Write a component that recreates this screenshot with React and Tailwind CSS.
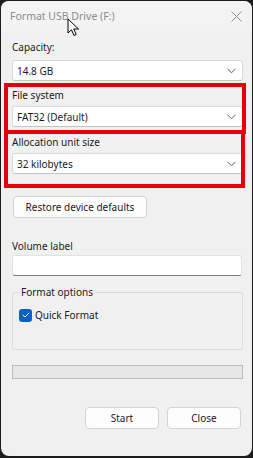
const FONT = { fontFamily: '"Noto Sans", "Open Sans", sans-serif' };

// combo box with a thin chevron on the right
const Combo = ({ value }) => (
	<div className="flex items-center justify-between w-[231px] h-[21px] bg-white border border-[#dadada] border-b-[#c4c4c4] rounded-[3px] pl-[4px] pr-[6px]">
		<span className="text-[10px] leading-[14px] text-[#1b1b1b]">{value}</span>
		<svg width="9" height="6" viewBox="0 0 9 6" fill="none" stroke="#5c5c5c" strokeWidth="1">
			<path d="M0.5 0.8 L4.5 4.8 L8.5 0.8" />
		</svg>
	</div>
);

const Label = ({ children, className = "" }) => <div className={"text-[10px] leading-[14px] text-[#1b1b1b] " + className}>{children}</div>;

const Button = ({ children, className = "" }) => (
	<button type="button" className={"block h-[22px] bg-[#fdfdfd] border border-[#d3d3d3] rounded-[4px] text-[10px] leading-[14px] text-[#1b1b1b] " + className}>
		{children}
	</button>
);

export default function App() {
	return (
		<div className="relative w-[253px] h-[458px] bg-[#1c1c1c] pt-px pl-px" style={FONT}>
			<div className="w-[251px] h-[455px] rounded-[8px] overflow-hidden bg-[#f0f0f0] flex flex-col">
				{/* title bar */}
				<div className="flex items-center justify-between h-[30px] bg-[#f3f3f3] pl-[9px] pr-[9px]">
					<span className="text-[10.5px] leading-[14px] text-[#8d8d8d]">Format USB Drive (F:)</span>
					<svg width="11" height="11" viewBox="0 0 11 11" stroke="#8d8d8d" strokeWidth="1" className="mr-[1px]">
						<path d="M0.5 0.5 L10.5 10.5 M10.5 0.5 L0.5 10.5" />
					</svg>
				</div>

				{/* body */}
				<div className="flex flex-col pl-[11px]">
					<Label className="mt-[9px]">Capacity:</Label>
					<div className="mt-[6px]">
						<Combo value="14.8 GB" />
					</div>
					<Label className="mt-[7px]">File system</Label>
					<div className="mt-[4px]">
						<Combo value="FAT32 (Default)" />
					</div>
					<Label className="mt-[8px]">Allocation unit size</Label>
					<div className="mt-[4px]">
						<Combo value="32 kilobytes" />
					</div>

					<Button className="mt-[22px] w-[134px] ml-px">Restore device defaults</Button>

					<Label className="mt-[21px]">Volume label</Label>
					<div className="mt-[2px] w-[230px] h-[21px] bg-white border border-[#e2e2e2] border-b-[#7a7a7a] rounded-[3px]" />

					{/* format options group */}
					<div className="relative mt-[16px] w-[231px] h-[58px] border border-[#dcdcdc] rounded-[2px]">
						<span className="absolute -top-[8px] left-[7px] px-[1px] bg-[#f0f0f0] text-[10px] leading-[14px] text-[#1b1b1b]">Format options</span>
						<div className="flex items-center gap-[3px] mt-[15px] ml-[6px]">
							<div className="flex items-center justify-center w-[13px] h-[13px] rounded-[3px] bg-[#0a63c2]">
								<svg width="8" height="6" viewBox="0 0 8 6" fill="none" stroke="white" strokeWidth="1">
									<path d="M0.8 3 L3 5 L7.2 0.8" />
								</svg>
							</div>
							<span className="text-[10px] leading-[14px] text-[#1b1b1b]">Quick Format</span>
						</div>
					</div>

					{/* progress bar */}
					<div className="mt-[15px] w-[231px] h-[14px] bg-[#e6e6e6] border border-[#bcbcbc]" />

					<div className="flex justify-end gap-[8px] w-[231px] mt-[28px] pr-[2px]">
						<Button className="w-[74px]">Start</Button>
						<Button className="w-[74px]">Close</Button>
					</div>
				</div>
			</div>

			{/* red highlight boxes drawn over the dialog */}
			<div className="absolute left-[4px] top-[83px] w-[242px] h-[51px] border-[4px] border-[#e5000c]" />
			<div className="absolute left-[4px] top-[130px] w-[241px] h-[58px] border-[4px] border-[#e5000c]" />

			{/* mouse cursor */}
			<svg className="absolute left-[67px] top-[18px]" width="13" height="19" viewBox="0 0 13 19">
				<path d="M1 1 L1 15 L4.5 11.8 L7 17.5 L9.2 16.5 L6.8 11 L11.5 11 Z" fill="white" stroke="black" strokeWidth="1" strokeLinejoin="round" />
			</svg>
		</div>
	);
}
